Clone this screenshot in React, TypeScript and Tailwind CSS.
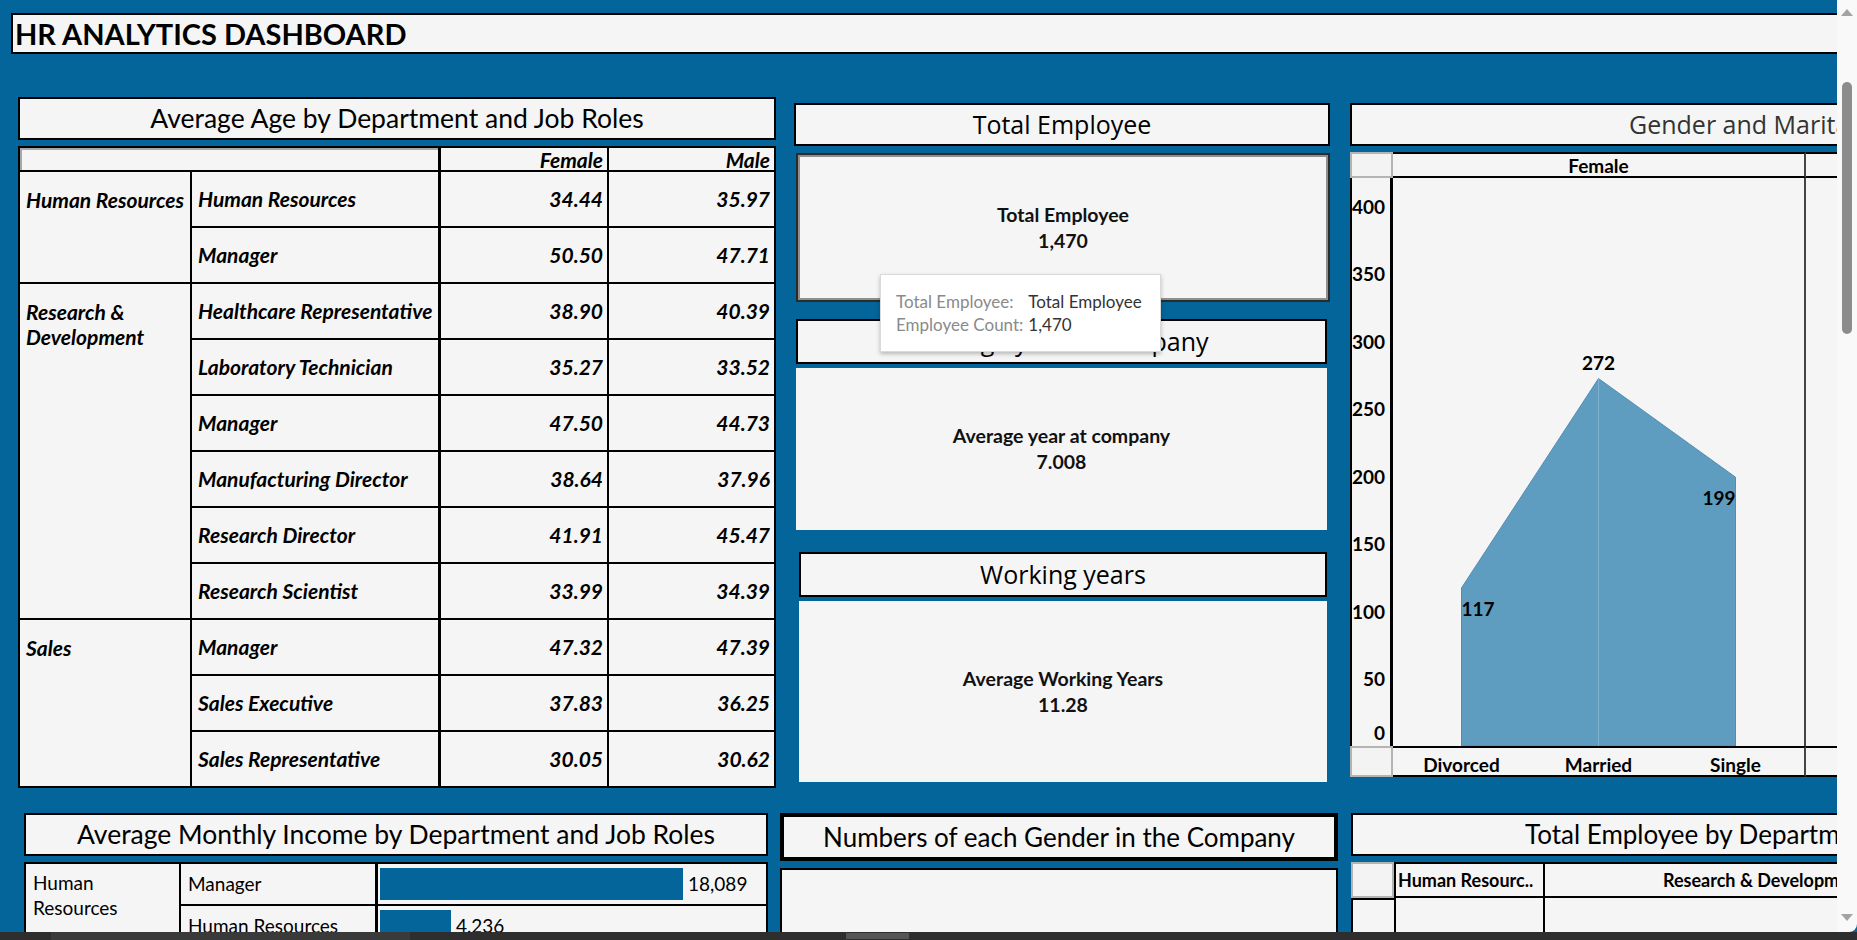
import React from "react";

const ageGroups = [
  {
    dept: ["Human Resources"],
    roles: [
      ["Human Resources", "34.44", "35.97"],
      ["Manager", "50.50", "47.71"],
    ],
  },
  {
    dept: ["Research &", "Development"],
    roles: [
      ["Healthcare Representative", "38.90", "40.39"],
      ["Laboratory Technician", "35.27", "33.52"],
      ["Manager", "47.50", "44.73"],
      ["Manufacturing Director", "38.64", "37.96"],
      ["Research Director", "41.91", "45.47"],
      ["Research Scientist", "33.99", "34.39"],
    ],
  },
  {
    dept: ["Sales"],
    roles: [
      ["Manager", "47.32", "47.39"],
      ["Sales Executive", "37.83", "36.25"],
      ["Sales Representative", "30.05", "30.62"],
    ],
  },
];

const incomeRows = [
  { role: "Manager", value: 18089 },
  { role: "Human Resources", value: 4236 },
];

// female counts by marital status
const marital = [
  { label: "Divorced", value: 117 },
  { label: "Married", value: 272 },
  { label: "Single", value: 199 },
];

const ticks = [400, 350, 300, 250, 200, 150, 100, 50, 0];
const PLOT_H = 568;
const PX_PER = 1.351;
const yOf = (v: number) => PLOT_H - v * PX_PER;

function AgeTable() {
  const total = ageGroups.reduce((n, g) => n + g.roles.length, 0);
  let idx = 0;
  return (
    <div className="mt-[6px] border-2 border-black bg-[#f5f5f5] font-['Lato',sans-serif] italic font-bold text-[21px] text-black">
      <div className="flex h-[24px] border-b-2 border-black">
        <div className="w-[421px] border-r-[3px] border-black shadow-[inset_2px_2px_0_#a8a8a8]" />
        <div className="w-[168px] border-r-2 border-black flex items-center justify-end pr-[4px] leading-none">
          Female
        </div>
        <div className="flex-1 flex items-center justify-end pr-[4px] leading-none">Male</div>
      </div>
      {ageGroups.map((g, gi) => (
        <div key={gi} className="flex">
          <div
            className={`w-[172px] border-r-2 border-black pl-[6px] pt-[15px] leading-[25px] whitespace-nowrap ${
              gi < ageGroups.length - 1 ? "border-b-2" : ""
            }`}
          >
            {g.dept.map((d) => (
              <div key={d}>{d}</div>
            ))}
          </div>
          <div className="flex-1">
            {g.roles.map((r) => {
              idx += 1;
              const last = idx === total;
              return (
                <div
                  key={r[0] + idx}
                  className={`flex ${last ? "h-[54px]" : "h-[56px] border-b-2 border-black"}`}
                >
                  <div className="w-[249px] border-r-[3px] border-black flex items-center pl-[6px] whitespace-nowrap overflow-hidden">
                    {r[0]}
                  </div>
                  <div className="w-[168px] border-r-2 border-black flex items-center justify-end pr-[4px]">
                    {r[1]}
                  </div>
                  <div className="flex-1 flex items-center justify-end pr-[4px]">{r[2]}</div>
                </div>
              );
            })}
          </div>
        </div>
      ))}
    </div>
  );
}

function Kpi({ label, value }: { label: string; value: string }) {
  return (
    <div className="flex flex-col items-center font-['Lato',sans-serif] font-bold text-[19.5px] leading-[26px] text-[#111]">
      <span>{label}</span>
      <span>{value}</span>
    </div>
  );
}

function MidTitle({ children, className = "" }: { children: React.ReactNode; className?: string }) {
  return (
    <div
      className={`border-2 border-black bg-[#f5f5f5] flex items-center justify-center font-['Open_Sans',sans-serif] text-[25px] text-black overflow-hidden whitespace-nowrap ${className}`}
    >
      {children}
    </div>
  );
}

function MaritalChart() {
  const w = 411;
  const xs = [w / 6, w / 2, (5 * w) / 6];
  const pts = marital.map((m, i) => `${xs[i]},${yOf(m.value)}`).join(" ");
  return (
    <div className="mt-[6px] font-['Lato',sans-serif] font-bold text-[19px] text-black">
      <div className="flex h-[26px]">
        <div className="w-[43px] border-2 border-[#b4b4b4] bg-[#f3f3f3]" />
        <div className="w-[413px] bg-[#f5f5f5] border-y-2 border-black border-r-2 border-r-[#444] flex items-center justify-center leading-none">
          Female
        </div>
        <div className="flex-1 bg-[#f5f5f5] border-y-2 border-black flex items-center justify-center leading-none">
          Male
        </div>
      </div>
      <div className="flex h-[568px] bg-[#f5f5f5]">
        <div className="relative w-[43px] border-l-2 border-r-[3px] border-black">
          {ticks.map((t) => (
            <span
              key={t}
              className="absolute right-[5px] -translate-y-1/2 leading-none"
              style={{ top: t === 0 ? 554 : yOf(t) }}
            >
              {t}
            </span>
          ))}
        </div>
        <div className="relative w-[413px] border-r-2 border-[#444]">
          <svg width={w} height={PLOT_H} className="absolute left-0 top-0">
            <polygon
              points={`${xs[0]},${PLOT_H} ${pts} ${xs[2]},${PLOT_H}`}
              fill="#5f9dc0"
              stroke="#4f8db3"
              strokeWidth="1"
            />
            <line x1={xs[1]} y1={yOf(272)} x2={xs[1]} y2={PLOT_H} stroke="#7fb2d0" strokeWidth="1" />
          </svg>
          <span
            className="absolute -translate-x-1/2 -translate-y-1/2 leading-none"
            style={{ left: xs[1], top: 184 }}
          >
            272
          </span>
          <span className="absolute -translate-y-1/2 leading-none" style={{ left: xs[0], top: 430 }}>
            117
          </span>
          <span
            className="absolute -translate-x-full -translate-y-1/2 leading-none"
            style={{ left: xs[2], top: 319 }}
          >
            199
          </span>
        </div>
        <div className="flex-1" />
      </div>
      <div className="flex h-[31px]">
        <div className="w-[43px] border-2 border-[#b4b4b4] bg-[#f3f3f3]" />
        <div className="w-[413px] border-y-2 border-black border-r-2 border-r-[#444] bg-[#f5f5f5] grid grid-cols-3 items-center text-center leading-none pt-[6px]">
          {marital.map((m) => (
            <span key={m.label}>{m.label}</span>
          ))}
        </div>
        <div className="flex-1 border-y-2 border-black bg-[#f5f5f5]" />
      </div>
    </div>
  );
}

function IncomeTable() {
  const max = 18089;
  return (
    <div className="mt-[6px] border-2 border-black bg-[#f5f5f5] flex font-['Lato',sans-serif] text-[19px] text-black">
      <div className="w-[155px] border-r-2 border-black pl-[7px] pt-[6px] leading-[25px]">
        <div>Human</div>
        <div>Resources</div>
      </div>
      <div className="flex-1">
        {incomeRows.map((r) => (
          <div key={r.role} className="flex h-[42px] border-b-2 border-black">
            <div className="w-[197px] border-r-[3px] border-black flex items-center pl-[7px] whitespace-nowrap">
              {r.role}
            </div>
            <div className="flex-1 flex items-center pl-[2px]">
              <div className="h-[32px] bg-[#03659a]" style={{ width: (r.value / max) * 303 }} />
              <span className="ml-[5px]">{r.value.toLocaleString("en-US")}</span>
            </div>
          </div>
        ))}
      </div>
    </div>
  );
}

function DeptTable() {
  return (
    <div className="mt-[6px] font-['Lato',sans-serif] font-bold text-[18px] text-black">
      <div className="flex h-[36px]">
        <div className="w-[43px] border-2 border-[#b4b4b4] bg-[#f3f3f3]" />
        <div className="w-[151px] border-2 border-black bg-[#f5f5f5] flex items-center pl-[2px] whitespace-nowrap leading-none">
          Human Resourc..
        </div>
        <div className="flex-1 border-y-2 border-black bg-[#f5f5f5] flex items-center pl-[118px] whitespace-nowrap leading-none">
          Research &amp; Development
        </div>
      </div>
      <div className="flex h-[60px]">
        <div className="w-[43px] border-l-2 border-t-2 border-black bg-[#f5f5f5]" />
        <div className="w-[151px] border-x-2 border-black bg-[#f5f5f5]" />
        <div className="flex-1 bg-[#f5f5f5]" />
      </div>
    </div>
  );
}

function Scrollbar() {
  return (
    <div className="w-[20px] bg-[#f9f9f9] flex flex-col items-center rounded-br-[8px]">
      <svg className="mt-[8px]" width="12" height="8" viewBox="0 0 12 8">
        <path d="M0 8 L6 1 L12 8 Z" fill="#a3a3a3" />
      </svg>
      <div className="mt-[66px] w-[10px] h-[252px] rounded-full bg-[#8c8c8c]" />
      <div className="flex-1" />
      <svg className="mb-[10px]" width="12" height="8" viewBox="0 0 12 8">
        <path d="M0 0 L6 7 L12 0 Z" fill="#a3a3a3" />
      </svg>
    </div>
  );
}

export default function App() {
  return (
    <div className="w-[1857px] h-[940px] overflow-hidden bg-[#03659a] flex flex-col">
      <div className="flex h-[932px]">
        <div className="w-[1837px] h-[932px] overflow-hidden relative">
          <div className="w-[2300px]">
            {/* dashboard title */}
            <div className="pt-[13px] pl-[11px]">
              <div className="w-[2280px] h-[41px] border-2 border-black bg-[#f5f5f5] flex items-center pl-[2px]">
                <h1 className="font-['Lato',sans-serif] font-bold text-[29px] leading-none text-black">
                  HR ANALYTICS DASHBOARD
                </h1>
              </div>
            </div>

            {/* first row */}
            <div className="flex items-start mt-[43px]">
              <div className="ml-[18px] w-[758px]">
                <div className="h-[43px] border-2 border-black bg-[#f5f5f5] flex items-center justify-center font-['Lato',sans-serif] text-[26.5px] text-black whitespace-nowrap">
                  Average Age by Department and Job Roles
                </div>
                <AgeTable />
              </div>

              <div className="relative ml-[18px] w-[536px] mt-[6px]">
                <MidTitle className="h-[43px]">Total Employee</MidTitle>
                <div className="mt-[7px] ml-[2px] w-[534px] h-[149px] border-2 border-[#2b2b2b] shadow-[inset_0_0_0_2px_#8f8f8f] bg-[#f5f5f5] flex items-center justify-center">
                  <Kpi label="Total Employee" value="1,470" />
                </div>
                <MidTitle className="mt-[17px] ml-[2px] w-[531px] h-[45px]">Average year at company</MidTitle>
                <div className="mt-[4px] ml-[2px] w-[531px] h-[162px] bg-[#f5f5f5] flex items-center justify-center">
                  <Kpi label="Average year at company" value="7.008" />
                </div>
                <MidTitle className="mt-[22px] ml-[5px] w-[528px] h-[45px]">Working years</MidTitle>
                <div className="mt-[4px] ml-[5px] w-[528px] h-[181px] bg-[#f5f5f5] flex items-center justify-center">
                  <Kpi label="Average Working Years" value="11.28" />
                </div>

                {/* hover tooltip */}
                <div className="absolute left-[86px] top-[171px] w-[281px] h-[78px] bg-white border border-[#dadada] shadow-[0_2px_4px_rgba(0,0,0,0.25)] pl-[15px] pt-[15px] font-['Lato',sans-serif] text-[17px] leading-[23px]">
                  <div className="grid grid-cols-[auto_auto] justify-start gap-x-[5px]">
                    <span className="text-[#8a8a8a]">Total Employee:</span>
                    <span className="text-[#333]">Total Employee</span>
                    <span className="text-[#8a8a8a]">Employee Count:</span>
                    <span className="text-[#333]">1,470</span>
                  </div>
                </div>
              </div>

              <div className="ml-[20px] w-[890px] mt-[6px]">
                <div className="h-[43px] border-2 border-black bg-[#f5f5f5] flex items-center pl-[277px] font-['Open_Sans',sans-serif] text-[25px] text-[#333] whitespace-nowrap">
                  Gender and Marital Status
                </div>
                <MaritalChart />
              </div>
            </div>

            {/* second row */}
            <div className="flex items-start mt-[25px]">
              <div className="ml-[24px] w-[744px]">
                <div className="h-[43px] border-2 border-black bg-[#f5f5f5] flex items-center justify-center font-['Lato',sans-serif] text-[26.5px] text-black whitespace-nowrap">
                  Average Monthly Income by Department and Job Roles
                </div>
                <IncomeTable />
              </div>

              <div className="ml-[12px] w-[558px]">
                <div className="h-[48px] border-4 border-black bg-[#f5f5f5] flex items-center justify-center font-['Lato',sans-serif] text-[26px] text-black whitespace-nowrap">
                  Numbers of each Gender in the Company
                </div>
                <div className="mt-[7px] h-[80px] border-2 border-black bg-[#f5f5f5]" />
              </div>

              <div className="ml-[13px] w-[900px]">
                <div className="h-[43px] border-2 border-black bg-[#f5f5f5] flex items-center pl-[172px] font-['Lato',sans-serif] text-[26px] text-black whitespace-nowrap">
                  Total Employee by Department
                </div>
                <DeptTable />
              </div>
            </div>
          </div>
        </div>
        <Scrollbar />
      </div>
      <div className="relative h-[8px] bg-[#2e2e2e]">
        <div className="absolute left-[51px] top-0 w-[359px] h-[8px] bg-[#3a3a3a]" />
        <div className="absolute left-[846px] top-[1px] w-[63px] h-[6px] bg-[#555]" />
      </div>
    </div>
  );
}
